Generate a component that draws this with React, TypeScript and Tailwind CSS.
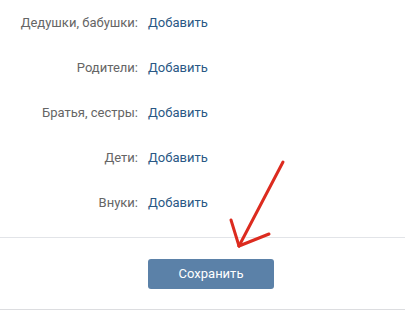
const rows = ["Дедушки, бабушки:", "Родители:", "Братья, сестры:", "Дети:", "Внуки:"];

export default function App() {
  return (
    <div className="relative w-[405px] h-[311px] bg-white overflow-hidden font-['Roboto','Open_Sans',sans-serif] text-[13px]">
      <div className="flex flex-col">
        {rows.map((label) => (
          <div key={label} className="flex items-center h-[45px]">
            <div className="w-[138px] text-right text-[#656565]">{label}</div>
            <a className="ml-[10px] text-[#2a5885] cursor-pointer">Добавить</a>
          </div>
        ))}
      </div>
      <div className="mt-[12px] border-t border-[#e2e4e8]" />
      <div className="flex justify-center pl-[17px] pt-[21px] pb-[20px]">
        <button className="w-[126px] h-[30px] rounded-[3px] bg-[#5b81a8] text-white text-[13px] leading-[30px]">
          Сохранить
        </button>
      </div>
      <div className="border-t border-[#dcdde0]" />

      {/* red arrow drawn on top */}
      <svg className="absolute left-0 top-0 pointer-events-none" width="405" height="311">
        <g stroke="#dc2b1f" strokeWidth="3" strokeLinecap="round" fill="none">
          <line x1="283" y1="162" x2="239" y2="246" />
          <line x1="239" y1="246" x2="231" y2="220" />
          <line x1="239" y1="246" x2="269" y2="234" />
        </g>
      </svg>
    </div>
  );
}
